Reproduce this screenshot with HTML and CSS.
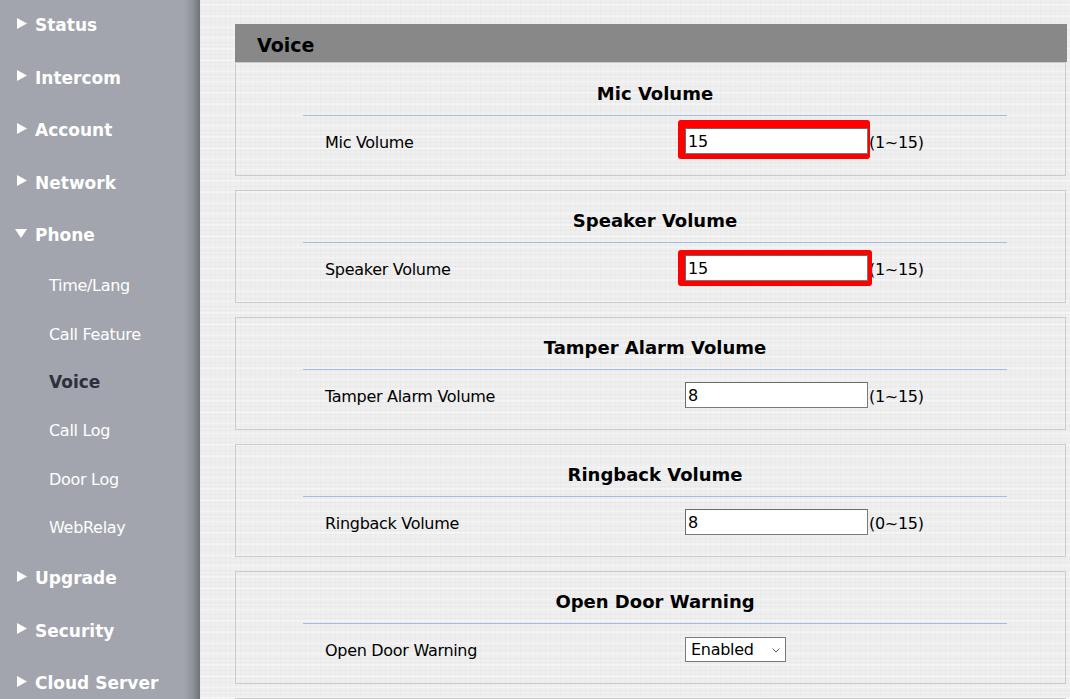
FILE: index.html
```html
<!DOCTYPE html>
<html lang="en">
<head>
<meta charset="utf-8">
<title>Voice</title>
<link rel="stylesheet" href="styles.css">
</head>
<body>
<div class="page">
  <nav class="sidebar">
    <ul class="menu">
      <li class="menu-item"><span class="arrow"><svg width="10" height="11" viewBox="0 0 10 11"><polygon points="0,0 10,5.5 0,11" fill="#fff"/></svg></span><span>Status</span></li>
      <li class="menu-item"><span class="arrow"><svg width="10" height="11" viewBox="0 0 10 11"><polygon points="0,0 10,5.5 0,11" fill="#fff"/></svg></span><span>Intercom</span></li>
      <li class="menu-item"><span class="arrow"><svg width="10" height="11" viewBox="0 0 10 11"><polygon points="0,0 10,5.5 0,11" fill="#fff"/></svg></span><span>Account</span></li>
      <li class="menu-item"><span class="arrow"><svg width="10" height="11" viewBox="0 0 10 11"><polygon points="0,0 10,5.5 0,11" fill="#fff"/></svg></span><span>Network</span></li>
      <li class="menu-item open"><span class="arrow"><svg width="12" height="9" viewBox="0 0 12 9"><polygon points="0,0 12,0 6,9" fill="#fff"/></svg></span><span>Phone</span></li>
      <li class="sub-item">Time/Lang</li>
      <li class="sub-item">Call Feature</li>
      <li class="sub-item active">Voice</li>
      <li class="sub-item">Call Log</li>
      <li class="sub-item">Door Log</li>
      <li class="sub-item">WebRelay</li>
      <li class="menu-item"><span class="arrow"><svg width="10" height="11" viewBox="0 0 10 11"><polygon points="0,0 10,5.5 0,11" fill="#fff"/></svg></span><span>Upgrade</span></li>
      <li class="menu-item"><span class="arrow"><svg width="10" height="11" viewBox="0 0 10 11"><polygon points="0,0 10,5.5 0,11" fill="#fff"/></svg></span><span>Security</span></li>
      <li class="menu-item"><span class="arrow"><svg width="10" height="11" viewBox="0 0 10 11"><polygon points="0,0 10,5.5 0,11" fill="#fff"/></svg></span><span>Cloud Server</span></li>
    </ul>
  </nav>

  <main class="main">
    <div class="panel-head">Voice</div>

    <section class="group group-first">
      <div class="group-inner">
        <h2 class="group-title">Mic Volume</h2>
        <div class="row">
          <span class="row-label">Mic Volume</span>
          <div class="row-field">
            <span class="field mark-a"><input class="text-input" type="text" value="15"></span><span class="hint">(1~15)</span>
          </div>
        </div>
      </div>
    </section>

    <section class="group">
      <div class="group-inner">
        <h2 class="group-title">Speaker Volume</h2>
        <div class="row">
          <span class="row-label">Speaker Volume</span>
          <div class="row-field">
            <span class="field mark-b"><input class="text-input" type="text" value="15"></span><span class="hint">(1~15)</span>
          </div>
        </div>
      </div>
    </section>

    <section class="group">
      <div class="group-inner">
        <h2 class="group-title">Tamper Alarm Volume</h2>
        <div class="row">
          <span class="row-label">Tamper Alarm Volume</span>
          <div class="row-field">
            <span class="field"><input class="text-input" type="text" value="8"></span><span class="hint">(1~15)</span>
          </div>
        </div>
      </div>
    </section>

    <section class="group">
      <div class="group-inner">
        <h2 class="group-title">Ringback Volume</h2>
        <div class="row">
          <span class="row-label">Ringback Volume</span>
          <div class="row-field">
            <span class="field"><input class="text-input" type="text" value="8"></span><span class="hint">(0~15)</span>
          </div>
        </div>
      </div>
    </section>

    <section class="group">
      <div class="group-inner">
        <h2 class="group-title">Open Door Warning</h2>
        <div class="row">
          <span class="row-label">Open Door Warning</span>
          <div class="row-field">
            <span class="select-wrap">
              <select class="select">
                <option selected>Enabled</option>
                <option>Disabled</option>
              </select>
              <svg class="chevron" width="8" height="5" viewBox="0 0 8 5"><polyline points="0.5,0.5 4,4 7.5,0.5" fill="none" stroke="#555" stroke-width="1"/></svg>
            </span>
          </div>
        </div>
      </div>
    </section>

    <section class="group group-empty"></section>
  </main>
</div>
</body>
</html>
```

FILE: styles.css
```css
* { box-sizing: border-box; }

html, body {
  margin: 0;
  padding: 0;
  height: 100%;
  overflow: hidden;
}

body {
  font-family: "DejaVu Sans", Verdana, sans-serif;
  color: #000;
  background-color: #efefef;
  background-image:
    repeating-linear-gradient(0deg, rgba(0,0,0,0.018) 0 1px, transparent 1px 4px),
    repeating-linear-gradient(90deg, rgba(0,0,0,0.016) 0 1px, transparent 1px 5px),
    repeating-linear-gradient(0deg, rgba(255,255,255,0.35) 0 2px, transparent 2px 11px);
}

.page {
  display: flex;
  min-height: 100vh;
}

/* ---------- sidebar ---------- */
.sidebar {
  width: 200px;
  flex: 0 0 200px;
  min-height: 100vh;
  background: linear-gradient(to right, #a2a5ad 0, #a2a5ad 184px, #8e9197 193px, #6f7277 200px);
}

.menu {
  list-style: none;
  margin: -1px 0 0;
  padding: 0;
}

.menu-item {
  height: 52.5px;
  display: flex;
  align-items: center;
  padding-left: 15px;
  color: #fff;
  font-weight: bold;
  font-size: 17px;
}

.arrow {
  width: 12px;
  display: flex;
  justify-content: flex-end;
  margin-right: 8px;
  margin-bottom: 4px;
}

.arrow svg { display: block; }

.sub-item {
  height: 48.4px;
  display: flex;
  align-items: center;
  padding-left: 49px;
  color: #fff;
  font-size: 16px;
  letter-spacing: -0.3px;
}

.sub-item.active {
  color: #2c313c;
  font-weight: bold;
  font-size: 17px;
  letter-spacing: 0;
}

/* ---------- main ---------- */
.main {
  flex: 1;
  padding: 24px 3px 0 35px;
}

.panel-head {
  height: 38px;
  display: flex;
  align-items: center;
  padding: 4px 0 0 22px;
  background: #888888;
  color: #000;
  font-weight: bold;
  font-size: 19px;
}

.group {
  border: 1px solid #cbcbcb;
  margin: 0 1px 14px 0;
  height: 113px;
}

.group-first {
  height: 114px;
  padding-top: 1px;
}

.group-inner {
  margin-left: 67px;
  width: 704px;
}

.group-title {
  margin: 0;
  padding: 18px 0 9px;
  line-height: 24px;
  font-size: 18px;
  font-weight: bold;
  text-align: center;
  color: #000;
  border-bottom: 1px solid #a3bde2;
}

.row {
  display: flex;
  align-items: center;
  padding: 12px 0 21px;
  height: 59px;
}

.row-label {
  width: 382px;
  padding: 2px 0 0 22px;
  font-size: 16px;
  letter-spacing: -0.3px;
  color: #000;
}

.row-field {
  display: flex;
  align-items: center;
  font-size: 16px;
  letter-spacing: -0.3px;
}

.field {
  position: relative;
  display: inline-block;
}

.mark-a::before,
.mark-b::before {
  content: "";
  position: absolute;
  background: #ff0000;
  border-radius: 3px;
  z-index: 1;
}

.mark-a::before { top: -8px; left: -7px; right: -2px; bottom: -5px; }
.mark-b::before { top: -5px; left: -7px; right: -4px; bottom: -5px; }

.text-input {
  position: relative;
  z-index: 2;
  display: block;
  width: 183px;
  height: 26px;
  margin: 0;
  padding: 1px 2px 0;
  border: 1px solid #7a7a7a;
  border-top-color: #6a6a6a;
  border-left-color: #6a6a6a;
  background: #fff;
  font-family: "DejaVu Sans", Verdana, sans-serif;
  font-size: 16px;
  letter-spacing: -0.3px;
  color: #000;
  outline: none;
}

.hint {
  margin-left: 1px;
  padding-top: 2px;
  color: #000;
}

.select-wrap {
  position: relative;
  display: inline-block;
}

.select {
  appearance: none;
  -webkit-appearance: none;
  display: block;
  width: 101px;
  height: 25px;
  margin: 0;
  padding: 1px 0 0 5px;
  border: 1px solid #7a7a7a;
  border-radius: 0;
  background: #fff;
  font-family: "DejaVu Sans", Verdana, sans-serif;
  font-size: 16px;
  letter-spacing: -0.3px;
  color: #000;
}

.chevron {
  position: absolute;
  right: 6px;
  top: 11px;
  pointer-events: none;
}

.group-empty {
  height: 60px;
}
```
